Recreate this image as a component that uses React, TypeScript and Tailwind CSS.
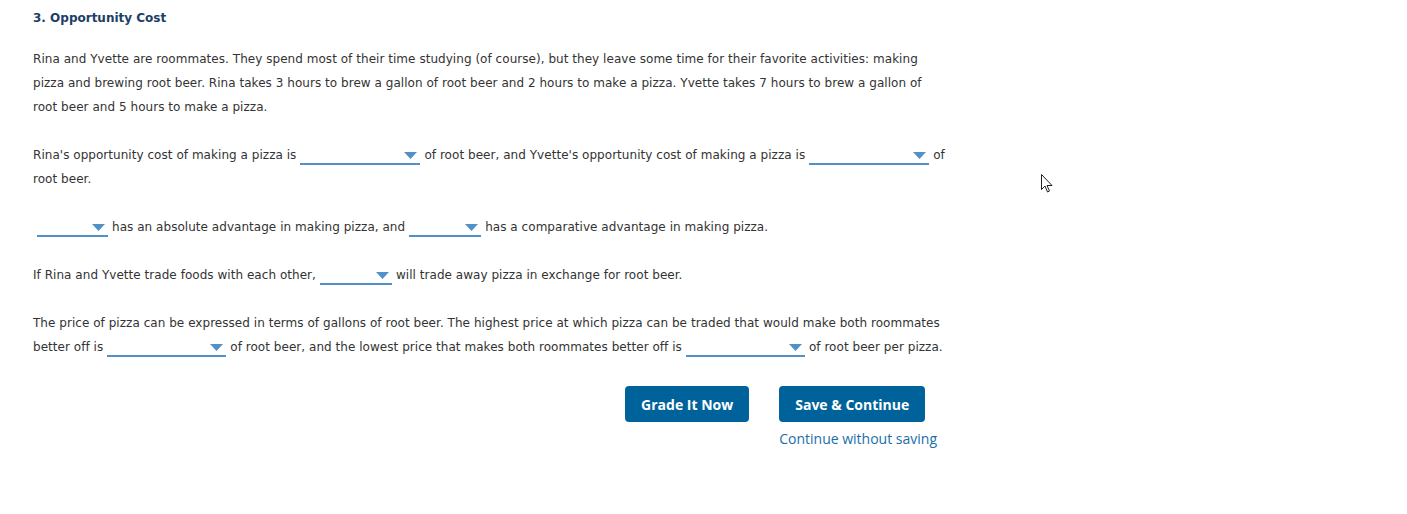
import React from "react";

const Drop = ({ w }: { w: number }) => (
  <span
    className="relative inline-block align-[-6px] h-[18px] border-b-2 border-[#5291c8] mx-[4px]"
    style={{ width: w }}
  >
    <svg className="absolute right-[3px] top-[5px]" width="13" height="7" viewBox="0 0 13 7">
      <polygon points="0,0 13,0 6.5,7" fill="#5291c8" />
    </svg>
  </span>
);

export default function App() {
  return (
    <div className="relative w-[1407px] h-[514px] bg-white text-[#333] overflow-hidden" style={{ fontFamily: '"DejaVu Sans", Verdana, sans-serif' }}>
      <div className="pl-[33px] pt-[10px] w-[970px]">
        <h3 className="text-[12px] font-bold text-[#1c3f66] leading-[16px]">3. Opportunity Cost</h3>
        <div className="text-[12px] leading-[24px] mt-[21px] tracking-[0.04px]">
          <p>
            Rina and Yvette are roommates. They spend most of their time studying (of course), but they leave some time for their favorite activities: making
            <br />
            pizza and brewing root beer. Rina takes 3 hours to brew a gallon of root beer and 2 hours to make a pizza. Yvette takes 7 hours to brew a gallon of
            <br />
            root beer and 5 hours to make a pizza.
          </p>
          <p className="mt-[24px]">
            Rina's opportunity cost of making a pizza is<Drop w={120} />of root beer, and Yvette's opportunity cost of making a pizza is<Drop w={120} />of
            <br />
            root beer.
          </p>
          <p className="mt-[24px]">
            <Drop w={71} />has an absolute advantage in making pizza, and<Drop w={72} />has a comparative advantage in making pizza.
          </p>
          <p className="mt-[24px]">
            If Rina and Yvette trade foods with each other,<Drop w={72} />will trade away pizza in exchange for root beer.
          </p>
          <p className="mt-[24px]">
            The price of pizza can be expressed in terms of gallons of root beer. The highest price at which pizza can be traded that would make both roommates
            <br />
            better off is<Drop w={119} />of root beer, and the lowest price that makes both roommates better off is<Drop w={119} />of root beer per pizza.
          </p>
        </div>
        <div className="flex justify-end gap-[30px] mt-[27px] w-[904px]" style={{ fontFamily: '"Open Sans", sans-serif' }}>
          <button className="h-[36px] px-[16px] rounded-[4px] bg-[#00629b] text-white text-[14px] font-bold">Grade It Now</button>
          <div className="flex flex-col items-start">
            <button className="h-[36px] px-[16px] rounded-[4px] bg-[#00629b] text-white text-[14px] font-bold">Save &amp; Continue</button>
            <a className="mt-[7px] text-[14px] text-[#1a6ea8] leading-[20px]">Continue without saving</a>
          </div>
        </div>
      </div>
      <svg className="absolute left-[1041px] top-[174px]" width="14" height="20" viewBox="0 0 14 20">
        <path d="M0.5 0.5 L0.5 15.5 L4 12 L6.5 18 L8.5 17 L6 11.5 L11 11.5 Z" fill="white" stroke="#222" strokeWidth="1" strokeLinejoin="miter" />
      </svg>
    </div>
  );
}
